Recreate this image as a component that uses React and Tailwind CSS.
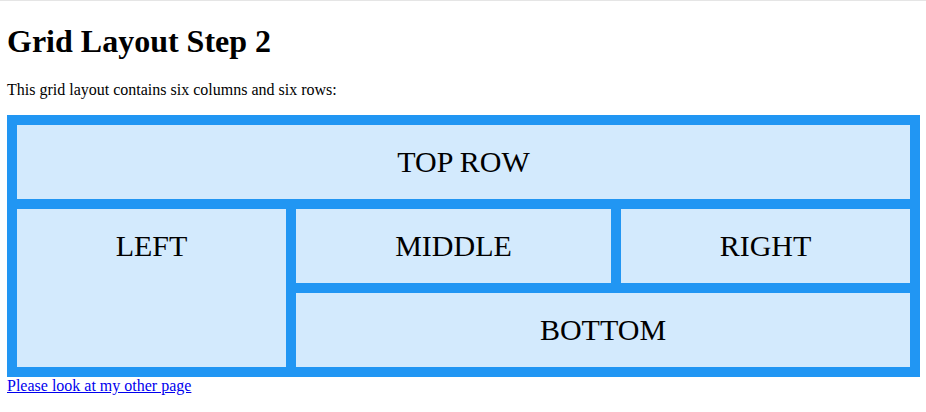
export default function App() {
  return (
    <div className="min-h-[412px] border-t border-[#e5e5e5] bg-white font-['Liberation_Serif',serif] text-black">
      <div className="px-[7px] flow-root">
        <h1 className="mt-[22px] mb-[21px] text-[32px] font-bold leading-[37px]">Grid Layout Step 2</h1>
        <p className="mb-[16px] text-[16px] leading-[18px]">This grid layout contains six columns and six rows:</p>
        <div className="grid w-[913px] grid-cols-[269px_315px_289px] gap-[10px] bg-[#2196F3] p-[10px] text-center text-[30px] leading-[34px]">
          <div className="col-span-3 bg-white/80 py-[20px]">TOP ROW</div>
          <div className="row-span-2 bg-white/80 py-[20px]">LEFT</div>
          <div className="bg-white/80 py-[20px]">MIDDLE</div>
          <div className="bg-white/80 py-[20px]">RIGHT</div>
          <div className="col-span-2 bg-white/80 py-[20px]">BOTTOM</div>
        </div>
        <div className="text-[16px] leading-[18px]">
          <a href="#" className="text-[#0000EE] underline">Please look at my other page</a>
        </div>
      </div>
    </div>
  );
}
